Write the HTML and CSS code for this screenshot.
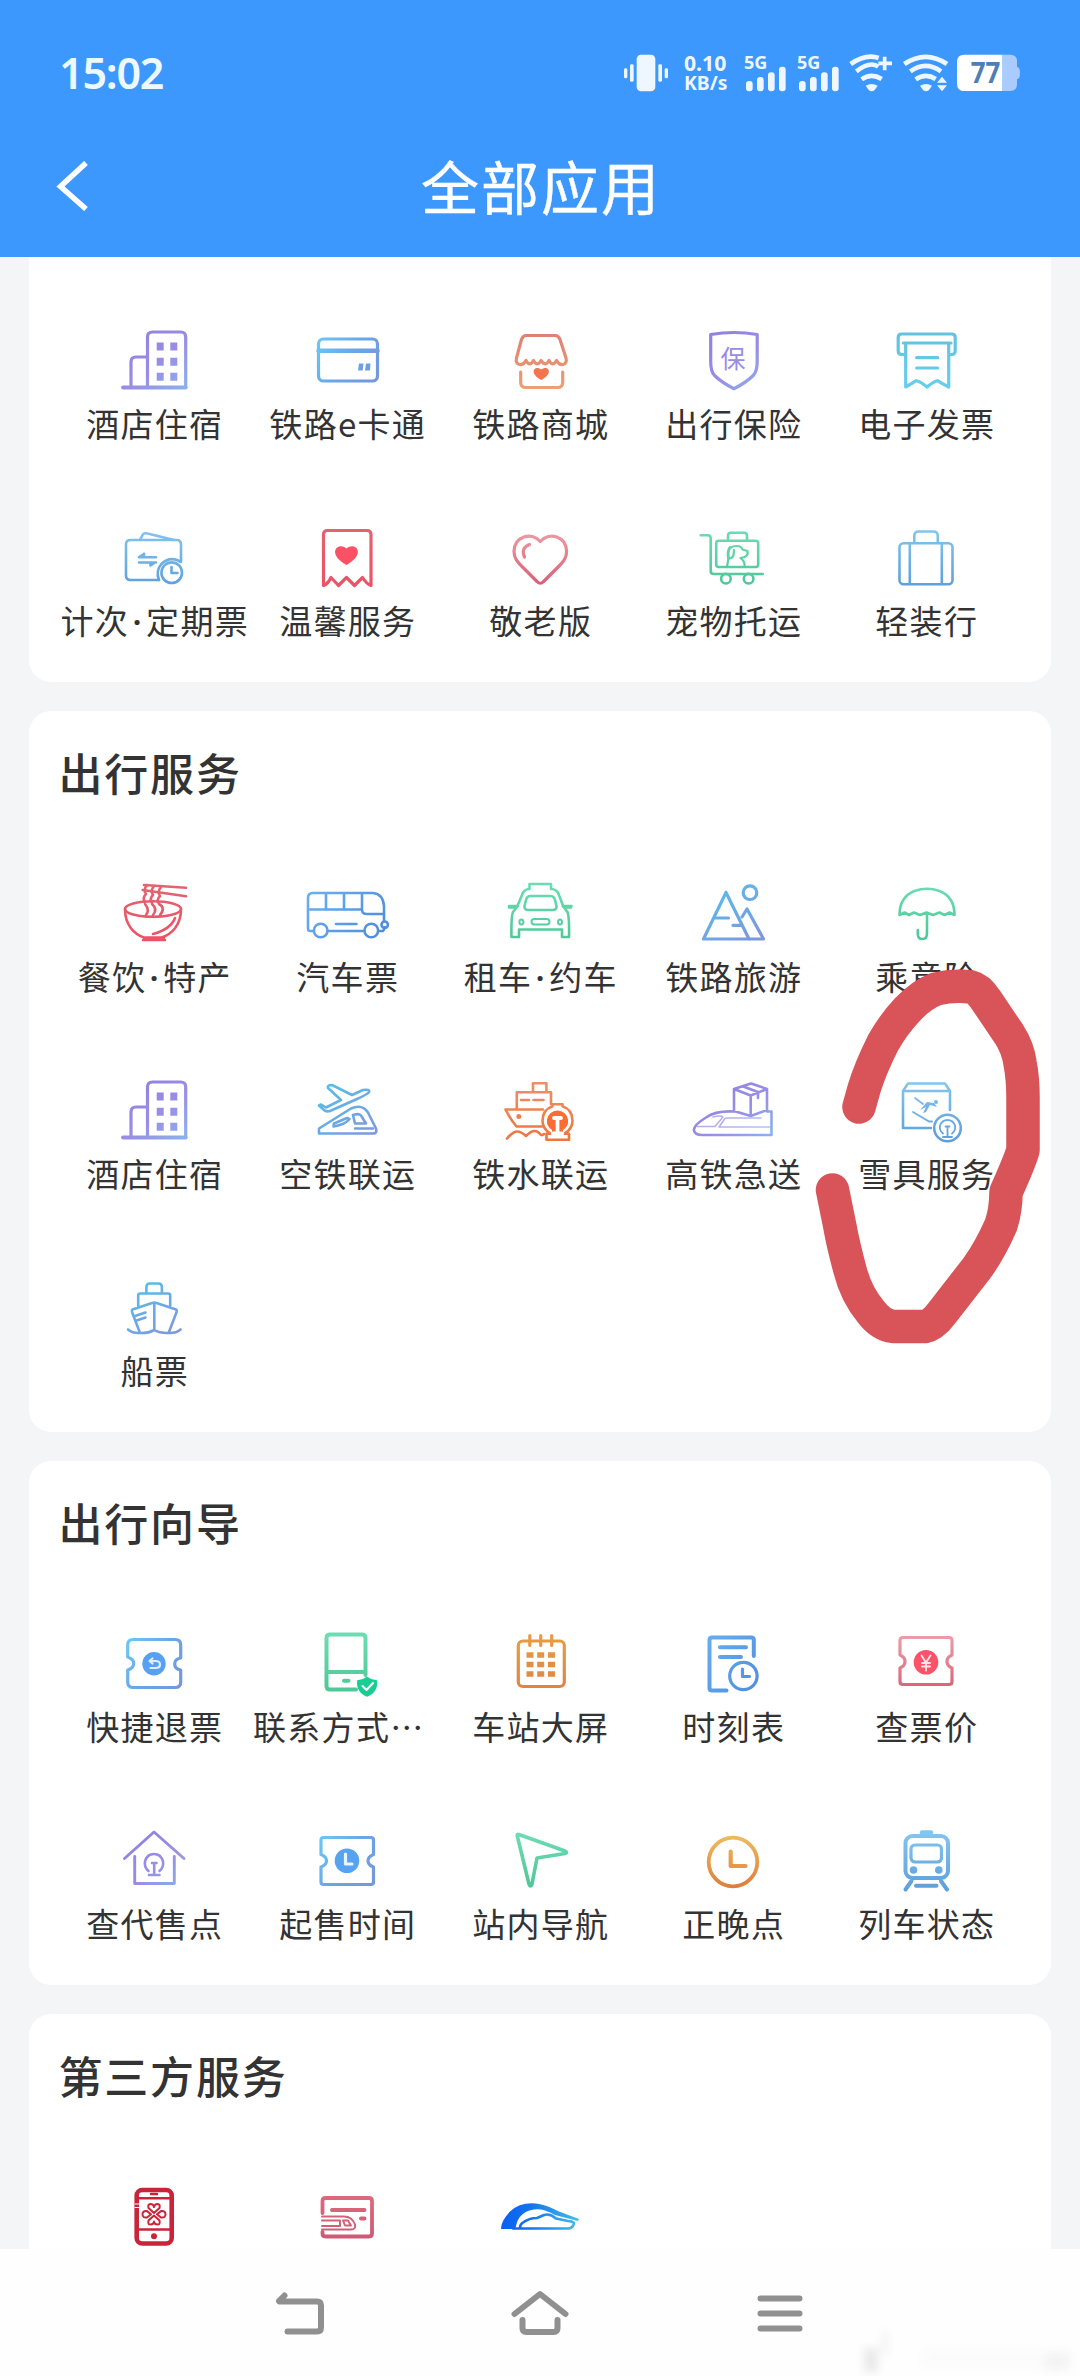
FILE: index.html
```html
<!DOCTYPE html>
<html lang="zh-CN">
<head>
<meta charset="utf-8">
<title>全部应用</title>
<link rel="stylesheet" href="styles.css">
</head>
<body>
<svg class="defs" width="0" height="0" aria-hidden="true">
  <defs>
    <linearGradient id="purple" gradientUnits="userSpaceOnUse" x1="25" y1="15" x2="75" y2="75"><stop offset="0" stop-color="#927fdf"/><stop offset=".55" stop-color="#998ee6"/><stop offset="1" stop-color="#8bb0ee"/></linearGradient>
    <linearGradient id="skyblue" gradientUnits="userSpaceOnUse" x1="15" y1="25" x2="75" y2="68"><stop offset="0" stop-color="#6cc8f5"/><stop offset=".5" stop-color="#6aa6e6"/><stop offset="1" stop-color="#7596dc"/></linearGradient>
    <linearGradient id="coral" gradientUnits="userSpaceOnUse" x1="45" y1="18" x2="45" y2="76"><stop offset="0" stop-color="#e07e74"/><stop offset="1" stop-color="#eda173"/></linearGradient>
    <linearGradient id="cyan" gradientUnits="userSpaceOnUse" x1="45" y1="18" x2="45" y2="76"><stop offset="0" stop-color="#63c2de"/><stop offset="1" stop-color="#66cfee"/></linearGradient>
    <linearGradient id="sky" gradientUnits="userSpaceOnUse" x1="45" y1="18" x2="45" y2="76"><stop offset="0" stop-color="#84c6ee"/><stop offset="1" stop-color="#5d9fdb"/></linearGradient>
    <linearGradient id="red" gradientUnits="userSpaceOnUse" x1="45" y1="18" x2="45" y2="76"><stop offset="0" stop-color="#e0646f"/><stop offset="1" stop-color="#ee5166"/></linearGradient>
    <linearGradient id="rose" gradientUnits="userSpaceOnUse" x1="45" y1="22" x2="45" y2="74"><stop offset="0" stop-color="#ec9aa5"/><stop offset="1" stop-color="#d95f75"/></linearGradient>
    <linearGradient id="green" gradientUnits="userSpaceOnUse" x1="45" y1="18" x2="45" y2="76"><stop offset="0" stop-color="#6cdcb4"/><stop offset="1" stop-color="#4cc795"/></linearGradient>
    <linearGradient id="blue" gradientUnits="userSpaceOnUse" x1="15" y1="22" x2="75" y2="70"><stop offset="0" stop-color="#69aef0"/><stop offset="1" stop-color="#4e8ddc"/></linearGradient>
    <linearGradient id="bluepurple" gradientUnits="userSpaceOnUse" x1="25" y1="20" x2="60" y2="75"><stop offset="0" stop-color="#55bfe8"/><stop offset="1" stop-color="#7d98e0"/></linearGradient>
    <linearGradient id="orange" gradientUnits="userSpaceOnUse" x1="45" y1="18" x2="45" y2="76"><stop offset="0" stop-color="#ea9c43"/><stop offset="1" stop-color="#dd8244"/></linearGradient>
    <linearGradient id="amber" gradientUnits="userSpaceOnUse" x1="45" y1="22" x2="45" y2="74"><stop offset="0" stop-color="#eebb5f"/><stop offset="1" stop-color="#de7d3c"/></linearGradient>
    <linearGradient id="orangered" gradientUnits="userSpaceOnUse" x1="45" y1="18" x2="45" y2="76"><stop offset="0" stop-color="#ee8f66"/><stop offset="1" stop-color="#ee7541"/></linearGradient>
    <linearGradient id="pinkred" gradientUnits="userSpaceOnUse" x1="45" y1="26" x2="45" y2="70"><stop offset="0" stop-color="#e0687c"/><stop offset="1" stop-color="#c95b74"/></linearGradient>
    <linearGradient id="ocean" gradientUnits="userSpaceOnUse" x1="5" y1="50" x2="80" y2="50"><stop offset="0" stop-color="#0a5ff5"/><stop offset=".4" stop-color="#1473ea"/><stop offset="1" stop-color="#41b8ec"/></linearGradient>
    <symbol id="hotel" viewBox="0 0 90 90">
      <path d="M38.500 73.500V23q0-5 5-5h28.200q5 0 5 5v50.500"/><path d="M38.500 43H27q-5 0-5 5v25.500"/><path d="M14 73.500H76.700" stroke-width="3.800"/>
      <path class="solid" d="M47.700 28.500h7v8h-7zM61.300 28.500h7v8h-7zM47.700 43.700h7v8h-7zM61.300 43.700h7v8h-7zM47.700 58.800h7v8h-7zM61.300 58.800h7v8h-7z"/>
    </symbol>
  </defs>
</svg>

<header class="header">
  <div class="status">
    <span class="time">15:02</span>
    <svg class="status-icons" viewBox="0 0 1320 210">
      <g fill="#eef7ff">
        <rect x="110" y="44" width="56" height="110" rx="13"/>
        <rect x="90" y="73" width="11" height="52" rx="4"/><rect x="72" y="85" width="10" height="30" rx="4"/>
        <rect x="175" y="73" width="11" height="52" rx="4"/><rect x="194" y="85" width="10" height="30" rx="4"/>
        <text x="252" y="93" textLength="127" lengthAdjust="spacingAndGlyphs" font-size="66">0.10</text>
        <text x="252" y="151" textLength="130" lengthAdjust="spacingAndGlyphs" font-size="59">KB/s</text>
        <text x="432" y="86" textLength="70" lengthAdjust="spacingAndGlyphs" font-size="53">5G</text>
        <text x="591" y="86" textLength="70" lengthAdjust="spacingAndGlyphs" font-size="53">5G</text>
        <g id="bars"><rect x="438" y="123" width="20" height="31" rx="9"/><rect x="471" y="111" width="20" height="43" rx="9"/><rect x="504" y="97" width="20" height="57" rx="9"/><rect x="537" y="80" width="20" height="74" rx="9"/></g>
        <use href="#bars" x="159"/>
        <path d="M797 137q18-10 36 0l-9 13q-9 8-18 0z"/>
        <path d="M960 137q18-10 36 0l-9 13q-9 8-18 0z"/>
        <path d="M1026 110l15 18h-30zM1026 154l15-18h-30z"/>
      </g>
      <g fill="none" stroke="#eef7ff" stroke-width="14">
        <path d="M752 72q46-32 84-18"/><path d="M769 94q42-32 66-14"/><path d="M785 118q29-20 60-1"/>
        <path d="M835 70h41M854 50v41" stroke-width="11"/>
        <path d="M913 72q64-43 128 0"/><path d="M931 94q45-33 92 0"/><path d="M947 118q30-20 60-1"/>
      </g>
      <path d="M1207 44h24q20 0 20 20v17q9 0 9 18t-9 18v16q0 20-20 20h-24z" fill="#a9cbfd"/>
      <path d="M1207 44h-114q-22 0-22 22v65q0 22 22 22h114z" fill="#fff"/>
      <text x="1112" y="128" textLength="89" lengthAdjust="spacingAndGlyphs" font-size="84" fill="#4f7eb5">77</text>
    </svg>
  </div>
  <div class="titlebar">
    <svg class="back" viewBox="0 0 34 50"><path d="M30 2L4.500 25.500L30 48"/></svg>
    <h1>全部应用</h1>
  </div>
</header>

<main class="content">
  <section class="card card-first">
    <div class="grid">
      <div class="app"><svg class="icon purple" viewBox="0 0 90 90"><use href="#hotel"/></svg><span>酒店住宿</span></div>
      <div class="app"><svg class="icon skyblue" viewBox="0 0 90 90"><rect x="16.500" y="25" width="59" height="42" rx="5"/><path d="M16.500 36.800h59" stroke-width="4.500"/><path class="solid" d="M57 49.500h4.500l-.8 7H56zM64 49.500h4.500l-.5 7h-5z"/></svg><span>铁路e卡通</span></div>
      <div class="app"><svg class="icon coral" viewBox="0 0 90 90"><path d="M31 21.500h29q3.500 0 5 4L71 44c2 8-6.500 8.500-9.500 2.500-2.500 4.500-5 4.500-7.500 0-2.500 4.500-5 4.500-8 0-2.500 4.500-5 4.500-7.500 0-2.500 4.500-5 4.500-7.500 0-3 6-11.500 5.500-9.500-2.500l5-18.500q1.500-4 4.500-4z"/><path d="M25.700 58v10.500q0 5 5 5h32q5 0 5-5V58"/><path d="M46.300 66c-14-8-5.500-15.500 0-10.500 5.500-5 14 2.500 0 10.500z" fill="#f4744f" stroke="none"/></svg><span>铁路商城</span></div>
      <div class="app"><svg class="icon purple" viewBox="0 0 90 90"><path d="M22.700 20.500q23.300-4 46.500 0v27q0 10-4 14-7 7-19.200 13.200-12-6-19.500-13.200-3.800-4-3.800-14z"/><text x="45" y="53.500" font-size="25" text-anchor="middle">保</text></svg><span>出行保险</span></div>
      <div class="app"><svg class="icon cyan" viewBox="0 0 90 90"><path d="M24.700 40.500h-4q-3.500 0-3.500-3.500V23.500q0-3.500 3.500-3.500h50q3.500 0 3.500 3.500V37q0 3.500-3.500 3.500h-3M22.500 29h47.500M24.700 29v44q5.500-3 10.500-6.300 5 1 10.800 6.300 6-5.300 10.500-6.300 5 3.300 11.200 6.300V29M35.700 43.700h21M35.700 54h21"/></svg><span>电子发票</span></div>

      <div class="app"><svg class="icon sky thin" viewBox="0 0 90 90"><path d="M72 50V33.500q0-4.500-4.500-4.500h-46q-4.500 0-4.500 4.500v31q0 4.500 4.500 4.500H50"/><path d="M31.500 28l2-4q1.500-2.500 5-1.500L65 29M30 46.200h17M30 51.500h17M30 46.200l5-3.500v3.500M46 51.500l-4.500 3v-3"/><circle cx="62.700" cy="61.700" r="10.300"/><path d="M50 69q-3.500-9 2-15.500 7-7.500 16-4.500l4 2M62.500 56v6h6"/></svg><span>计次<b class="dot">·</b>定期票</span></div>
      <div class="app"><svg class="icon red" viewBox="0 0 90 90"><path d="M21.500 74.500V23.500q0-4 4-4h39.500q4 0 4 4v51q-4.500-1.500-8.500-8l-8 8-8-8-8 8-7.500-8q-3 6.500-7.500 8z"/><path d="M44.500 54c-21-12-8-24 0-16.500 8-7.500 21 4.500 0 16.500z" fill="#fb5164" stroke="none"/></svg><span>温馨服务</span></div>
      <div class="app"><svg class="icon rose" viewBox="0 0 90 90"><path d="M45.300 30.500c-9-10-26-5.500-26.300 10 0 7 4 11 8 15l15 15q3.300 3.500 6.600 0l15-15c4-4 8-8 8-15-.3-15.500-17.300-20-26.300-10z"/><path d="M34.500 33.500q-9 3.500-5 12.500"/></svg><span>敬老版</span></div>
      <div class="app"><svg class="icon green thin" viewBox="0 0 90 90"><path d="M12.700 24.300h7q3 0 3 3V60q0 3 3 3h49M40 29.700v-5q0-3 3-3h13q3 0 3 3v5"/><rect x="28.200" y="29.700" width="42" height="26.300" rx="2.500"/><circle cx="37.900" cy="67.700" r="4.800"/><circle cx="60.600" cy="67.700" r="4.800"/><path d="M39 55.500l1.500-8V41q1-6 8-6 5 0 6 3.500l5 1.500q1.500 6-7 7 5 4 4 8.500M42 36q-3 3-2 11 6 2 6-8" stroke-width="2.200"/></svg><span>宠物托运</span></div>
      <div class="app"><svg class="icon sky thin" viewBox="0 0 90 90"><rect x="18.500" y="32.300" width="53" height="41" rx="4"/><path d="M33.300 32v-7q0-4.500 4.500-4.500h14.500q4.500 0 4.500 4.500v7M28.800 32v41M60.800 32v41"/></svg><span>轻装行</span></div>
    </div>
  </section>

  <section class="card">
    <h2>出行服务</h2>
    <div class="grid">
      <div class="app"><svg class="icon red thin" viewBox="0 0 90 90"><ellipse cx="44" cy="42" rx="28" ry="7.800"/><path d="M16 42c0 16 9 25 19 28.500h17.500C63 67 72 58 72 42M34 73h22M35 71h20M66 51q-4 11-22 16M35 18l42 2.700M33.700 23L77 29.300"/><path d="M38 18q-4 5-1 9-4 4-1 8M45 19q-4 5-1 9-4 4-1 8M52 20q-4 5-1 9-4 4-1 8M36 37q5 6 1 11M43 37q6 5 1 11M50 37q7 4 1 11"/></svg><span>餐饮<b class="dot">·</b>特产</span></div>
      <div class="app"><svg class="icon blue thin" viewBox="0 0 90 90"><path d="M11 64H8.500q-2.500 0-2.500-2.500V31q0-5 5-5h60q10 1 11 13v15M76.500 64H81q1.500-1 1.500-4M26 64h36M6 42.500h54M24 26v16.500M42 26v16.500M60 26v17q0 4 5 4h17M34 57h20.500"/><circle cx="18.700" cy="63.500" r="6.800"/><circle cx="69.300" cy="63.500" r="6.800"/><circle cx="82.700" cy="57.700" r="3.200"/></svg><span>汽车票</span></div>
      <div class="app"><svg class="icon green thin" viewBox="0 0 90 90"><path d="M34.500 22v-5h21.500v5q6 0 8 6l4.500 12 4 5q2 5 1.500 25h-7v-7.500h-43V70H16.500q-.5-20 1.500-25l4-5L27 28q2-6 7.500-6zM14 39h9M67.500 39h9M14 40.500h7M69 40.500h7"/><path d="M35.500 29h20q3.500 0 4.500 4l1.500 6q.5 4-4 4h-24q-4.500 0-4-4l1.500-6q1-4 4.500-4z"/><rect x="36.500" y="52" width="18" height="5.500" rx="2.700" stroke-width="2"/><ellipse cx="26.400" cy="55" rx="2" ry="2.500" stroke-width="2"/><ellipse cx="65" cy="55" rx="2" ry="2.500" stroke-width="2"/></svg><span>租车<b class="dot">·</b>约车</span></div>
      <div class="app"><svg class="icon bluepurple" viewBox="0 0 90 90"><path d="M38 25.500L15.500 72h60L59 42l-5 8M38 25.500L61 72M28 51h12.500M45 58.300h9"/><circle cx="62" cy="25.700" r="6.800"/></svg><span>铁路旅游</span></div>
      <div class="app"><svg class="icon green thin" viewBox="0 0 90 90"><path d="M18.500 48q0-18 15-24 12.500-4.500 25 0 15 6 15 24l-5-2.500-5 2.500-5-2.500-6.500 2.500-6.500-2.500-6.500 2.500-6-2.500-5 2.500-4.500-2.500zM46 46v20.500q0 5.500-4.700 5.500t-4.500-5.500V63"/></svg><span>乘意险</span></div>

      <div class="app"><svg class="icon purple" viewBox="0 0 90 90"><use href="#hotel"/></svg><span>酒店住宿</span></div>
      <div class="app"><svg class="icon bluepurple thin" viewBox="0 0 90 90"><path d="M17 41.500l2-1 5 3 15-7.500-13-12q-1-3 4-3l20 10 11-5q7-1 6 2-1 2-12 7L28 47q-4 1-6-1z"/><path d="M17 69.500v-5L49 44.500q11-5 17 4l8 16q1.500 5-3 5H17M31.500 62.500l.500-3 13-5.500 2.500 1q-4 5.500-16 7.500zM51 51q6-2 8 .5l5 8H53zM53 64.500h18"/></svg><span>空铁联运</span></div>
      <div class="app"><svg class="icon orangered thin" viewBox="0 0 90 90"><path d="M38 28.300v-9h13.400v9M21.800 44V28.300H56V40M10.500 45.500H48M10.500 45.500q5 10 11 17H47M26 36h8M38.500 36h10"/><circle cx="23.800" cy="52.500" r="1.200"/><path d="M12 74.500q6-7 10-7 4 0 9 4.500 9-9 14-2 2 2 4 0"/><path d="M51.500 75.700v-6h4q-8-5-8-13 0-11 10-14.500v-2h10v2q10 3.500 10 14.500 0 8-8 13h4.500v6z" fill="#fff"/><path d="M57 68v-2q-6-4-5-10.500 2-8.500 10.500-9 8.500.5 10.500 9Q74 62 68 66v2z" fill="#fb6d35" stroke="none"/><path d="M59 54h7M62.500 54v14M58 69.500h9" stroke="#fff" stroke-width="3.800"/></svg><span>铁水联运</span></div>
      <div class="app"><svg class="icon purple thin" viewBox="0 0 90 90"><path d="M46 47.500q-18-1-28 6-13 8-12 13 1 4.500 8 4.500h69.500V47.500H79"/><path d="M25 53q8-2 10 0l-8 9.500H9M38 54h35M37 54.500l-6 8.500h52" stroke-width="1.600" opacity=".7"/><path d="M46 25l17-5.500L79 25v21l-16.300 6L46 47zM46 25l16.700 6.500L79 25M62.700 31.500V52M54.500 22.300l15.500 5.700v6"/></svg><span>高铁急送</span></div>
      <div class="app"><svg class="icon sky thin" viewBox="0 0 90 90"><path d="M50 64H22V27l5-7.500h37l5 7.500v19M22 27h47"/><circle cx="66.500" cy="64" r="13.300"/><path d="M62 69.500q-4-3-3-8 2-5.500 7.500-5.500t7.500 5.500q1 5-3 8M64.500 62.500h4M66.500 62.500v10M62 73h9M32 48l16 9.500 3 0M34 34l8 6" stroke-width="1.800"/><path class="solid" d="M39 46l7-8 7 1 3 4-7-2-4 7-3 1 3-6z"/><circle class="solid" cx="55" cy="38" r="2"/></svg><span>雪具服务</span></div>

      <div class="app"><svg class="icon bluepurple thin" viewBox="0 0 90 90"><path d="M37.400 32V26q0-3.500 3.500-3.500h8.500q3.500 0 3.500 3.500v6M29.200 45V34.500q0-2 2-2h28q2 0 2 2V45M23.500 48.500q-1 .5-.5 2.500l8 21q8 .5 14.300-3 6 3.500 14.300 3l8-21q.5-2-.5-2.500L47.500 42q-2-1-4.400 0zM45.300 42v27M19 68.500q5 4 12 3.500M71.600 68.500q-5 4-12 3.500M26 55l10.500-3.500M27.500 59.500l9-3"/></svg><span>船票</span></div>
    </div>
  </section>

  <section class="card">
    <h2>出行向导</h2>
    <div class="grid">
      <div class="app"><svg class="icon skyblue" viewBox="0 0 90 90"><path d="M18.700 40V28q0-5.500 5.500-5.500h42q5.500 0 5.500 5.500V41q-6 1-6 6t6 6v12q0 5.500-5.500 5.500h-42q-5.500 0-5.500-5.500V53q6-2 6-6.500t-6-6.500z"/><circle cx="45" cy="46.700" r="11.700" fill="#58a0f2" stroke="none"/><path d="M41.500 51h5q4.500 0 4.500-3.500t-4.500-3.500h-5.500M43.500 41.500l-3 2.500 3 2.500" stroke="#dceeff" stroke-width="2.200"/></svg><span>快捷退票</span></div>
      <div class="app"><svg class="icon green" viewBox="0 0 90 90"><path d="M54 72.500H28q-3.500 0-3.500-3.500V21q0-3.500 3.500-3.500h32q3.500 0 3.500 3.500v37M24.500 55h39" stroke-width="4"/><path d="M42 63.800h4.500" stroke-width="4"/><path d="M65 59.500q5 4 9.800 3.500 2 12-9.800 16.800Q53.500 75 55.300 63q5 .5 9.700-3.500z" fill="#17cf93" stroke="none"/><path d="M60.500 69l4 4 6.500-7" stroke="#fff" stroke-width="2"/></svg><span class="long">联系方式…</span></div>
      <div class="app"><svg class="icon orange" viewBox="0 0 90 90"><rect x="23.300" y="24" width="46" height="45.500" rx="4.500"/><path d="M34.800 18.500v10M45.700 18.500v10M56.700 18.500v10"/><path class="solid" d="M31.500 35.200h7v5.600h-7zM42.200 35.200h7v5.600h-7zM53 35.200h7v5.600h-7zM31.500 44.700h7v5.600h-7zM42.200 44.700h7v5.600h-7zM53 44.700h7v5.600h-7zM31.500 54.200h7v5.600h-7zM42.200 54.200h7v5.600h-7zM53 54.200h7v5.600h-7z"/></svg><span>车站大屏</span></div>
      <div class="app"><svg class="icon blue" viewBox="0 0 90 90"><path d="M65.800 39V23q0-2.500-2.500-2.500H24q-2.500 0-2.500 2.500v48q0 2.500 2.500 2.500h14.500M32 30.200h26M32 40h21" stroke-width="4"/><circle cx="55.400" cy="59" r="13.700"/><path d="M54.500 52v7.500h7"/></svg><span>时刻表</span></div>
      <div class="app"><svg class="icon rose" viewBox="0 0 90 90"><path d="M19 38V23.500q0-3 3-3h46q3 0 3 3V38q-5 2-5 6.500t5 6.500v13.500q0 3-3 3H22q-3 0-3-3V51q5-2 5-6.500t-5-6.500z"/><circle cx="45" cy="45.300" r="12.300" fill="#fb5369" stroke="none"/><path d="M40.500 38.500l4.500 7 4.500-7M45 45.500v8M41 46h8M41 49.500h8" stroke="#ffe8ea" stroke-width="1.800"/></svg><span>查票价</span></div>

      <div class="app"><svg class="icon purple thin" viewBox="0 0 90 90"><path d="M15.500 44.500L45 18l30 26.500M25.700 42.500v27h39.600v-27" stroke-width="2.900"/><path d="M39.500 57q-4.500-3.500-3.500-9.500 2-7.500 9-7.500t9 7.500q1 6-3.500 9.500M43 49h4.500M45.200 49v11.500M40 61h10.500"/></svg><span>查代售点</span></div>
      <div class="app"><svg class="icon skyblue" viewBox="0 0 90 90"><path d="M19 40.500V26q0-2.500 2.500-2.500h47.500q2.500 0 2.500 2.500v14.500q-5.500 2-5.500 6.300t5.500 6.200V68q0 2.500-2.500 2.500H21.500q-2.500 0-2.500-2.500V53q5.500-2 5.500-6.200T19 40.500z"/><circle cx="45" cy="46.700" r="12.300" fill="#56a3f2" stroke="none"/><path d="M43.500 40v10h6.500" stroke="#e8f4ff"/></svg><span>起售时间</span></div>
      <div class="app"><svg class="icon green" viewBox="0 0 90 90"><path d="M24 20.500l46 16.500q3 1.500 0 2.500l-28 4.500-5 26q-1.500 4-3 0L22.300 22q-.3-2.500 1.700-1.500z" stroke-width="3.600"/></svg><span>站内导航</span></div>
      <div class="app"><svg class="icon amber" viewBox="0 0 90 90"><circle cx="45" cy="48" r="24.300" stroke-width="3.800"/><path d="M42.700 37.500V52H57.500" stroke-width="4.200"/></svg><span>正晚点</span></div>
      <div class="app"><svg class="icon sky" viewBox="0 0 90 90"><rect x="24.500" y="22" width="42.500" height="42" rx="7" stroke-width="4"/><path d="M41 18.500h9" stroke-width="4.500"/><rect x="30" y="31" width="30.500" height="17" rx="4"/><circle class="solid" cx="32.500" cy="56" r="3.800"/><circle class="solid" cx="57.800" cy="56" r="3.800"/><path d="M30.500 67l-6 8.500M60 67l6 8.500M35 71.700h20.500" stroke-width="4"/></svg><span>列车状态</span></div>
    </div>
  </section>

  <section class="card card-last">
    <h2>第三方服务</h2>
    <div class="grid">
      <div class="app"><svg class="icon crimson" viewBox="0 0 90 90"><rect x="27.700" y="20" width="35" height="53.500" rx="5.500" stroke-width="4.600"/><path d="M28 28.300h34M28 59.500h34M42 24h6" stroke-width="2.500"/><circle cx="45" cy="66.300" r="3" fill="#c92439" stroke="none"/><path d="M26 34h6M26 37.500h6" stroke="#fff" stroke-width="1"/><path d="M45 43l-5.500-5q-1-4 2-4t3.500 3q.5-3 3.500-3t2 4zM45 45.600l-5.500 5q-1 4 2 4t3.500-3q.5 3 3.500 3t2-4zM42 44.300l-4 3.200q-4.500.5-4.500-3.200t4.500-3.200zM48 44.300l4 3.200q4.500.5 4.500-3.200T52 41.100z" stroke-width="2"/></svg></div>
      <div class="app"><svg class="icon pinkred" viewBox="0 0 90 90"><path d="M20.500 43V31q0-3 3-3h43.500q3 0 3 3v32.500q0 3-3 3H23.500q-3 0-3-3V62" stroke-width="3.800"/><path d="M30 40h32.500M59 48.500h3.500" stroke-width="4"/><path d="M20 46.500h22q8 0 11 8 1 5-4 5H20M20 50.500h18v5.500H20M41 50.500h5l3 5h-6z" stroke-width="2"/></svg></div>
      <div class="app"><svg class="icon ocean" viewBox="0 0 90 90"><path class="solid" d="M6 59q0-8 9-17.500 10-9.500 26-8 10 1 23 8l20 7.500-1 2-23-6q-12-7-21-5.500-15 2-18 16.500 0 2.500-2 3z"/><path d="M18 58.500h55q5 0 6-5.500-2-2-6-2l-12-2.500q-6-5.500-12-3.500l-7 3q-8 0-14 4.500-3 2-3 5" stroke-width="2.600"/></svg></div>
    </div>
  </section>

  <svg class="scribble" viewBox="0 0 1080 2376"><path d="M859 1107L864 1089Q870 1069 883 1043Q893 1025 907 1010Q921 995 936 989Q953 985 971 987Q979 989 986 1000L1009 1034Q1018 1048 1020 1063Q1023 1078 1023 1098V1150Q1020 1161 1006 1192Q1006 1210 1001 1225Q990 1250 977 1268L942 1313Q933 1325 925 1326.500H893Q881 1325 871 1312Q856 1294 850 1270Q843 1244 840 1227L832.500 1190"/></svg>
</main>

<nav class="navbar">
  <svg class="nav-icon" viewBox="0 0 60 60"><path d="M14.500 12.500L9 18M9.500 18.500H47q4 0 4 4v22q0 4-4 4H17.500"/></svg>
  <svg class="nav-icon" viewBox="0 0 60 60"><path d="M4.500 31L30 11l25.500 20M12.500 37v8q0 4 4 4h27q4 0 4-4v-8"/></svg>
  <svg class="nav-icon" viewBox="0 0 60 60"><path d="M10.500 15.500h39M10.500 30.500h39M10.500 45.500h39"/></svg>
  <svg class="smudge" viewBox="0 0 230 50"><g fill="#777"><rect x="14" y="22" width="14" height="24" opacity=".25"/><rect x="32" y="6" width="6" height="22" opacity=".15"/><rect x="72" y="22" width="120" height="20" opacity=".04"/><rect x="194" y="26" width="26" height="18" opacity=".12"/></g></svg>
</nav>
</body>
</html>
```

FILE: styles.css
```css
* { box-sizing: border-box; }

body {
  margin: 0;
  width: 1080px;
  height: 2376px;
  overflow: hidden;
  display: flex;
  flex-direction: column;
  background: #f4f5f7;
  color: #333;
  font-family: "Noto Sans CJK SC", "Noto Sans", sans-serif;
}

.defs { position: absolute; }

.header {
  flex: none;
  height: 257px;
  padding-top: 40px;
  background: #3c98fc;
  color: #fff;
}

.status {
  height: 70px;
  padding: 0 40px 0 59px;
  display: flex;
  justify-content: space-between;
  align-items: center;
}

.time {
  font: 600 43px/64px "Noto Sans", sans-serif;
  letter-spacing: -1.200px;
  color: #eef8ff;
  margin-top: -5px;
}

.status-icons {
  width: 440px;
  height: 70px;
  font-family: "Noto Sans", sans-serif;
  font-weight: 700;
}

.titlebar {
  height: 147px;
  padding: 0 56px;
  display: grid;
  grid-template-columns: 34px 1fr 34px;
  align-items: center;
}

.back {
  width: 34px;
  height: 50px;
  fill: none;
  stroke: #fff;
  stroke-width: 5.500;
  margin-top: 4px;
}

h1 {
  margin: 3px 0 0;
  padding-left: 2px;
  font-size: 58px;
  font-weight: 400;
  line-height: 80px;
  letter-spacing: 2px;
  text-align: center;
  -webkit-text-stroke: 0.400px;
}

.content {
  flex: 1;
  min-height: 0;
  overflow: hidden;
  padding: 0 29px;
  display: flex;
  flex-direction: column;
  gap: 29px;
}

.card {
  flex: none;
  padding: 0 28px 40px 28.500px;
  border-radius: 22px;
  background: #fff;
}

.card-first {
  padding-top: 57px;
  border-radius: 0 0 22px 22px;
}

.card-last { border-radius: 22px 22px 0 0; }

h2 {
  margin: 0;
  padding-left: 1px;
  height: 156px;
  font-size: 44px;
  font-weight: 500;
  line-height: 123px;
  letter-spacing: 1.800px;
}

.grid {
  display: grid;
  grid-template-columns: repeat(5, 193px);
  row-gap: 66px;
}

.app {
  height: 131px;
  display: flex;
  flex-direction: column;
  align-items: center;
}

.app span {
  padding-left: 1.500px;
  font-size: 33px;
  line-height: 39px;
  letter-spacing: 1.300px;
  white-space: nowrap;
}

.app .long { padding-right: 18px; }

.dot {
  display: inline-block;
  width: 17px;
  text-align: center;
  font-family: "Noto Sans", sans-serif;
  font-weight: 600;
  line-height: 1;
}

.icon {
  flex: none;
  width: 90px;
  height: 90px;
  fill: none;
  stroke: var(--ink);
  stroke-width: 3.200;
  stroke-linecap: round;
  stroke-linejoin: round;
}

.thin { stroke-width: 2.600; }
.solid, .icon text { fill: var(--ink); stroke: none; }

.purple { --ink: url(#purple); }
.skyblue { --ink: url(#skyblue); }
.coral { --ink: url(#coral); }
.cyan { --ink: url(#cyan); }
.sky { --ink: url(#sky); }
.red { --ink: url(#red); }
.rose { --ink: url(#rose); }
.green { --ink: url(#green); }
.blue { --ink: url(#blue); }
.bluepurple { --ink: url(#bluepurple); }
.orange { --ink: url(#orange); }
.amber { --ink: url(#amber); }
.orangered { --ink: url(#orangered); }
.pinkred { --ink: url(#pinkred); }
.ocean { --ink: url(#ocean); }
.crimson { --ink: #c92439; }

/* hand-drawn marker circle over the page */
.scribble {
  position: absolute;
  left: 0;
  top: 0;
  width: 1080px;
  height: 2376px;
  pointer-events: none;
  fill: none;
  stroke: #d95459;
  stroke-width: 33.500;
  stroke-linecap: round;
  stroke-linejoin: round;
}

.navbar {
  position: relative;
  flex: none;
  height: 127px;
  padding: 0 180px;
  display: grid;
  grid-template-columns: repeat(3, 240px);
  place-items: center;
  background: #fefefe;
}

.nav-icon {
  width: 60px;
  height: 60px;
  fill: none;
  stroke: #909090;
  stroke-width: 6;
  stroke-linecap: round;
  stroke-linejoin: round;
}

.smudge {
  position: absolute;
  right: 0;
  bottom: 0;
  width: 230px;
  height: 50px;
  filter: blur(4px);
  opacity: .6;
}
```
